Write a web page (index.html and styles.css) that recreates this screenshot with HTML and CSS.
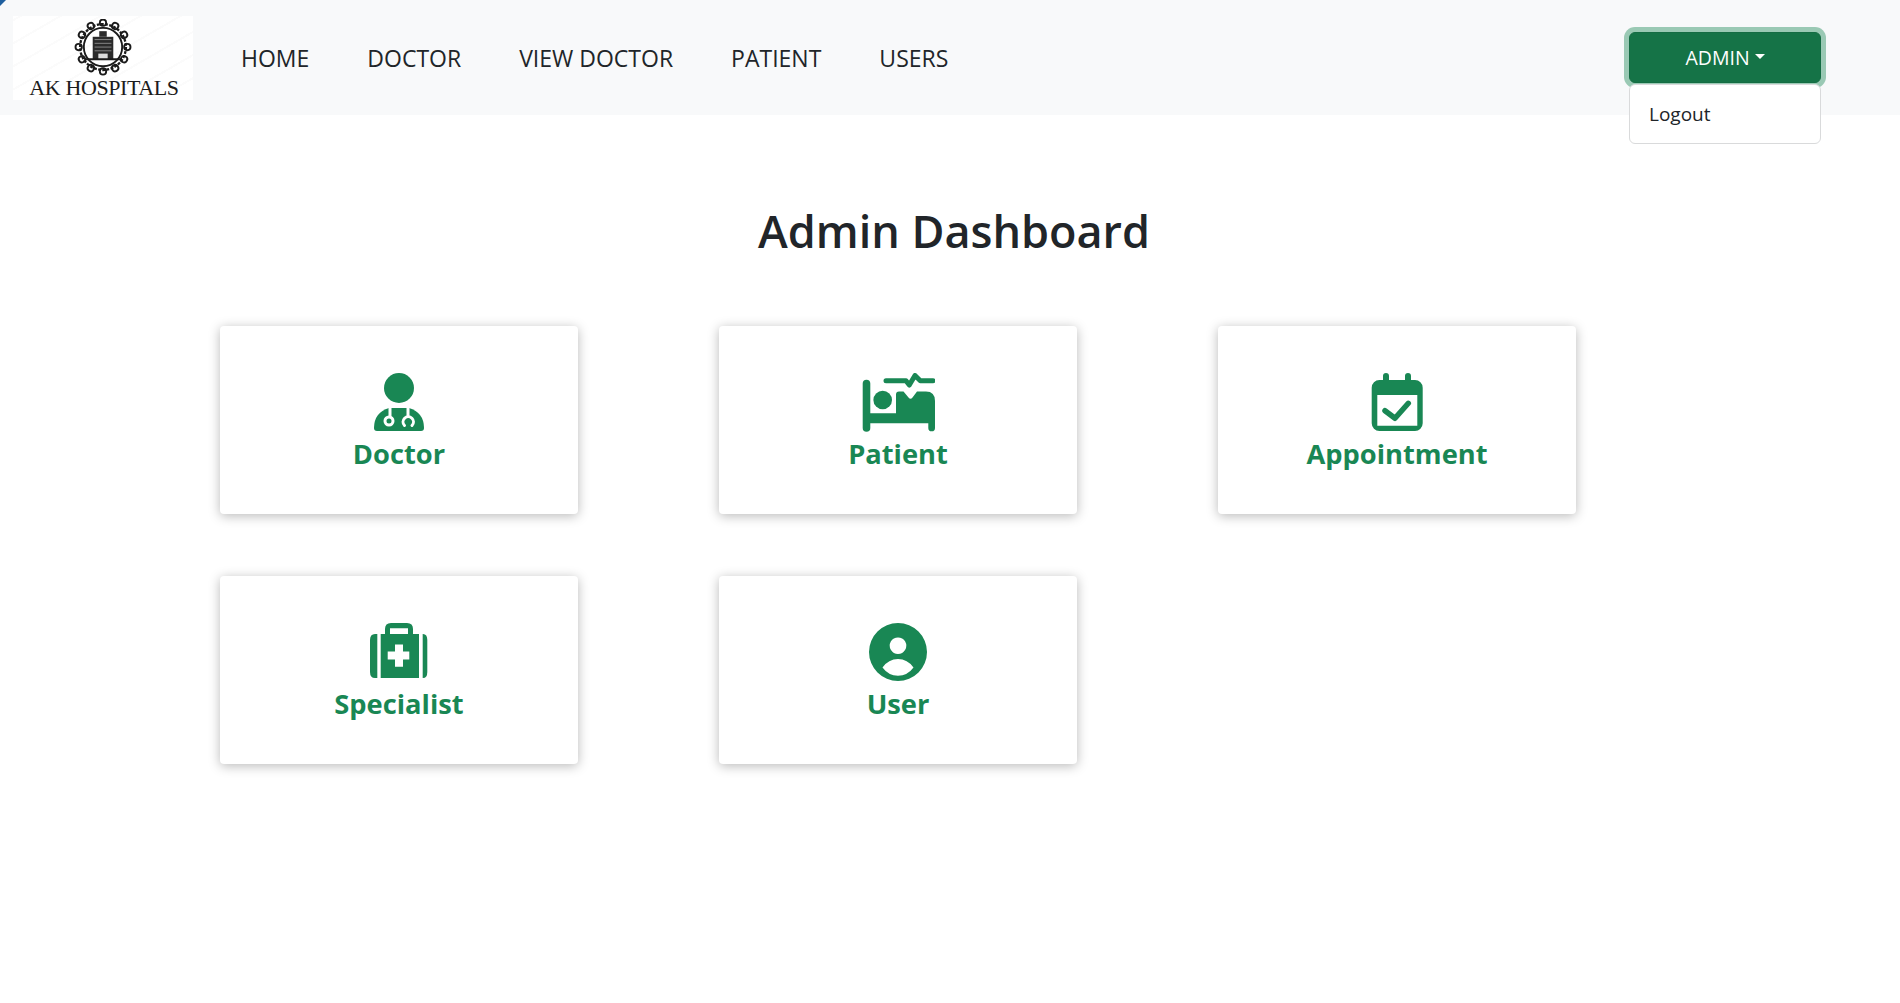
FILE: index.html
```html
<!DOCTYPE html>
<html lang="en">
<head>
<meta charset="utf-8">
<title>Admin Dashboard</title>
<link rel="stylesheet" href="styles.css">
</head>
<body>
<svg class="corner" width="6" height="6" viewBox="0 0 6 6"><path d="M0 0H6L0 6Z" fill="#1f5f9e"/></svg>
<nav class="navbar">
  <div class="logo">
    <svg class="emblem" width="64" height="58" viewBox="0 0 68 62">
      <g fill="none" stroke="#1a1a1a">
        <g stroke-width="2">
          <circle cx="34" cy="4" r="3.400"/>
          <circle cx="34" cy="4" r="3.400" transform="rotate(30 34 30)"/>
          <circle cx="34" cy="4" r="3.400" transform="rotate(60 34 30)"/>
          <circle cx="34" cy="4" r="3.400" transform="rotate(90 34 30)"/>
          <circle cx="34" cy="4" r="3.400" transform="rotate(120 34 30)"/>
          <circle cx="34" cy="4" r="3.400" transform="rotate(150 34 30)"/>
          <circle cx="34" cy="4" r="3.400" transform="rotate(180 34 30)"/>
          <circle cx="34" cy="4" r="3.400" transform="rotate(210 34 30)"/>
          <circle cx="34" cy="4" r="3.400" transform="rotate(240 34 30)"/>
          <circle cx="34" cy="4" r="3.400" transform="rotate(270 34 30)"/>
          <circle cx="34" cy="4" r="3.400" transform="rotate(300 34 30)"/>
          <circle cx="34" cy="4" r="3.400" transform="rotate(330 34 30)"/>
        </g>
        <circle cx="34" cy="30" r="24.500" stroke-width="2.500" stroke-dasharray="3 1.500"/>
        <circle cx="34" cy="30" r="20.500" stroke-width="2"/>
      </g>
      <path d="M23 19h22v24H23z" fill="#2a2a2a"/>
      <path d="M30 13h8v6h-8z" fill="#2a2a2a"/>
      <path d="M25 22h18M25 26h18M25 30h18M25 34h18" stroke="#8a8a8a" stroke-width="1"/>
      <path d="M29 37h10v6H29z" fill="#ddd"/>
      <path d="M15 43h38" stroke="#1a1a1a" stroke-width="2"/>
    </svg>
    <span class="logo-text">AK HOSPITALS</span>
  </div>
  <ul class="nav-links">
    <li><a href="#">HOME</a></li>
    <li><a href="#">DOCTOR</a></li>
    <li><a href="#">VIEW DOCTOR</a></li>
    <li><a href="#">PATIENT</a></li>
    <li><a href="#">USERS</a></li>
  </ul>
  <div class="dropdown">
    <button class="admin-btn">ADMIN<span class="caret"></span></button>
    <div class="menu"><a href="#">Logout</a></div>
  </div>
</nav>
<main class="content">
  <h1 class="title">Admin Dashboard</h1>
  <div class="cards">
    <a class="card" href="#">
      <svg class="icon" width="54" height="60" viewBox="0 0 54 60">
        <circle cx="27" cy="15" r="15"/>
        <path d="M2 55Q2 39.500 17 35H37Q52 39.500 52 55Q52 58 49 58H5Q2 58 2 55Z"/>
        <g fill="none" stroke="#fff" stroke-width="3">
          <path d="M18 35V44"/>
          <circle cx="17" cy="48" r="4"/>
          <path d="M36 35V43.500"/>
          <path d="M32.500 52.500A5.200 5.200 0 1 1 40 52.500" stroke-linecap="round"/>
        </g>
      </svg>
      <span class="label">Doctor</span>
    </a>
    <a class="card" href="#">
      <svg class="icon" width="74" height="60" viewBox="0 0 74 60">
        <path d="M1.700 10.500A3.800 3.800 0 0 1 9.300 10.500V40.300H35V21.500A3 3 0 0 1 38 18.500H42.500L47.500 24.500Q49.500 27 51.500 24.500L56 18.500H65Q74 18.500 74 28V55A3.300 3.300 0 0 1 67.300 55V50.300H9.300V55A3.800 3.800 0 0 1 1.700 55Z"/>
        <circle cx="21.700" cy="27" r="9.300"/>
        <path d="M25 7.700H45L48.300 12L54 2.500L59.300 7.700H72" fill="none" stroke="#198754" stroke-width="5" stroke-linecap="round" stroke-linejoin="round"/>
      </svg>
      <span class="label">Patient</span>
    </a>
    <a class="card" href="#">
      <svg class="icon" width="54" height="60" viewBox="0 0 54 60">
        <path fill-rule="evenodd" d="M13 3a3 3 0 0 1 6 0V7H35V3a3 3 0 0 1 6 0V7H45A7.700 7.700 0 0 1 52.700 14.700V50.300A7.700 7.700 0 0 1 45 58H9.400A7.700 7.700 0 0 1 1.700 50.300V14.700A7.700 7.700 0 0 1 9.400 7H13ZM7.300 22V52.700H47.300V22Z"/>
        <path d="M15 37.700L25 45.300L38.300 30.300" fill="none" stroke="#198754" stroke-width="5.500" stroke-linecap="round" stroke-linejoin="round"/>
      </svg>
      <span class="label">Appointment</span>
    </a>
    <a class="card" href="#">
      <svg class="icon" width="60" height="60" viewBox="0 0 60 60">
        <path d="M8.300 11V55H6Q1 55 1 49V17Q1 11 6 11Z"/>
        <path fill-rule="evenodd" d="M11.700 11H16V6Q16 0 22 0H38Q44 0 44 6V11H50V55H11.700ZM21 5.300V11H39V5.300ZM26 21.500V28.500H18.700V36.500H26V43.700H34V36.500H40.300V28.500H34V21.500Z"/>
        <path d="M53.700 11H54Q58.300 11 58.300 17V49Q58.300 55 54 55H53.700Z"/>
      </svg>
      <span class="label">Specialist</span>
    </a>
    <a class="card" href="#">
      <svg class="icon" width="60" height="60" viewBox="0 0 60 60">
        <path fill-rule="evenodd" d="M30 0A29 29 0 1 1 30 58A29 29 0 1 1 30 0ZM30 14.400A8.300 8.300 0 1 0 30.010 14.400ZM30 36Q20.500 36 14.500 44.500Q20.500 52.700 30 52.700Q39.500 52.700 45.500 44.500Q39.500 36 30 36Z"/>
      </svg>
      <span class="label">User</span>
    </a>
  </div>
</main>
</body>
</html>
```
FILE: styles.css
```css
* { box-sizing: border-box; }
html, body { margin: 0; height: 100%; }
body {
  background: #fff;
  color: #212529;
  font-family: "Open Sans", "Noto Sans", sans-serif;
  overflow: hidden;
}
.corner { position: absolute; top: 0; left: 0; }
.navbar {
  display: flex;
  align-items: center;
  height: 115px;
  padding: 0 79px 0 13px;
  background: #f8f9fa;
}
.logo {
  width: 180px;
  height: 84px;
  background: repeating-linear-gradient(-30deg, #fff 0 18px, #fbfbfb 18px 20px);
  display: flex;
  flex-direction: column;
  align-items: center;
}
.emblem { flex: none; margin-top: 3px; }
.logo-text {
  font-family: "Liberation Serif", serif;
  font-size: 22px;
  line-height: 18px;
  letter-spacing: -0.4px;
  color: #1c1c1c;
  white-space: nowrap;
  margin: 2px 0 0 2px;
}
.nav-links {
  display: flex;
  gap: 58px;
  list-style: none;
  margin: 0 0 0 48px;
  padding: 0;
  flex: 1;
}
.nav-links a {
  color: #212529;
  font-size: 23px;
  text-decoration: none;
}
.dropdown { position: relative; margin-top: -1px; }
.admin-btn {
  display: flex;
  align-items: center;
  justify-content: center;
  width: 192px;
  height: 51px;
  background: #157347;
  color: #fff;
  border: 1px solid #146c43;
  border-radius: 6px;
  box-shadow: 0 0 0 5px rgba(60, 153, 110, .5);
  font: 19.5px "Open Sans", "Noto Sans", sans-serif;
}
.caret {
  margin-left: 5px;
  margin-top: -1px;
  border-top: 5px solid #fff;
  border-left: 5px solid transparent;
  border-right: 5px solid transparent;
}
.menu {
  position: absolute;
  top: 52px;
  left: 0;
  width: 192px;
  height: 60px;
  padding: 0 19px;
  display: flex;
  align-items: center;
  background: #fff;
  border: 1px solid #d9dadb;
  border-radius: 6px;
}
.menu a { color: #212529; font-size: 19px; text-decoration: none; }
.content { padding-left: 220px; }
.title {
  margin: 86px 0 0;
  width: 1468px;
  text-align: center;
  font-size: 45px;
  line-height: 60px;
  font-weight: 600;
}
.cards {
  display: grid;
  grid-template-columns: repeat(3, 358px);
  grid-auto-rows: 188px;
  column-gap: 141px;
  row-gap: 62px;
  margin-top: 65px;
}
.card {
  display: flex;
  flex-direction: column;
  align-items: center;
  padding-top: 47px;
  background: #fff;
  border-radius: 4px;
  box-shadow: 0 2px 12px rgba(0, 0, 0, .28);
  color: #198754;
  text-decoration: none;
}
.icon { fill: #198754; display: block; flex: none; }
.label {
  font-size: 27.300px;
  line-height: 36px;
  font-weight: 700;
  margin-top: 3px;
}
```
